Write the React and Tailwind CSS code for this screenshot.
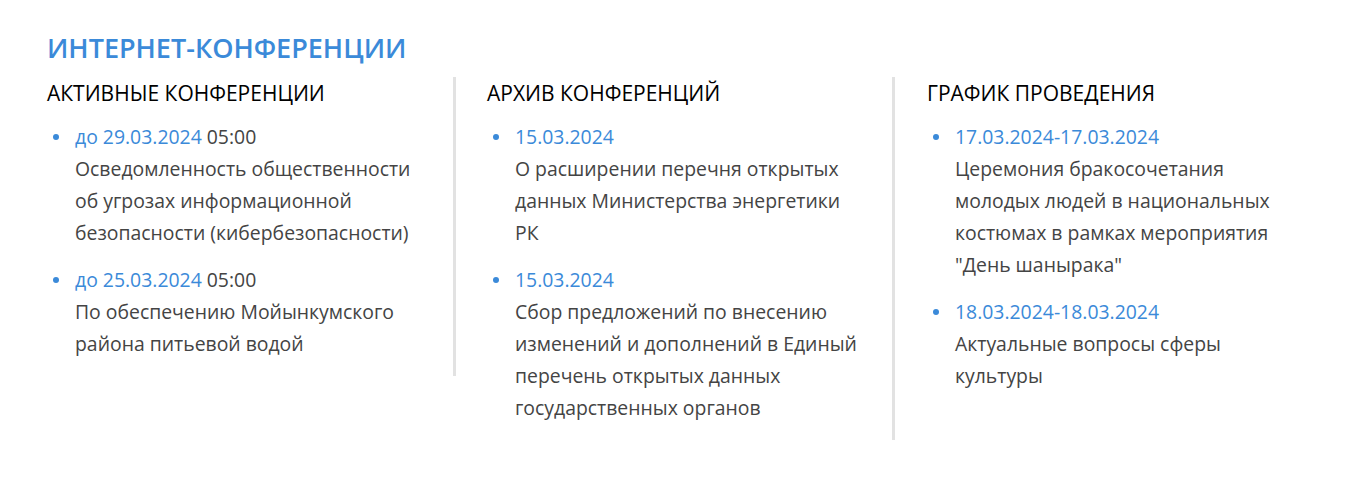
import React from 'react';

const columns = [
  {
    title: 'АКТИВНЫЕ КОНФЕРЕНЦИИ',
    items: [
      { date: 'до 29.03.2024', time: '05:00', lines: ['Осведомленность общественности', 'об угрозах информационной', 'безопасности (кибербезопасности)'] },
      { date: 'до 25.03.2024', time: '05:00', lines: ['По обеспечению Мойынкумского', 'района питьевой водой'] },
    ],
  },
  {
    title: 'АРХИВ КОНФЕРЕНЦИЙ',
    items: [
      { date: '15.03.2024', lines: ['О расширении перечня открытых', 'данных Министерства энергетики', 'РК'] },
      { date: '15.03.2024', lines: ['Сбор предложений по внесению', 'изменений и дополнений в Единый', 'перечень открытых данных', 'государственных органов'] },
    ],
  },
  {
    title: 'ГРАФИК ПРОВЕДЕНИЯ',
    items: [
      { date: '17.03.2024-17.03.2024', lines: ['Церемония бракосочетания', 'молодых людей в национальных', 'костюмах в рамках мероприятия', '"День шанырака"'] },
      { date: '18.03.2024-18.03.2024', lines: ['Актуальные вопросы сферы', 'культуры'] },
    ],
  },
];

export default function App() {
  return (
    <div className="w-[1348px] h-[488px] bg-white pl-[47px] pt-[30px]" style={{ fontFamily: '"Open Sans", sans-serif' }}>
      {/* Header */}
      <h1 className="text-[27px] leading-[36px] font-semibold text-[#3b8ad9]">ИНТЕРНЕТ-КОНФЕРЕНЦИИ</h1>

      {/* Columns */}
      <div className="flex items-start mt-[11px]">
        {columns.map((col, i) => (
          <div
            key={col.title}
            className={`${i === 0 ? 'w-[409px] pl-0' : i === 1 ? 'w-[439px] pl-[31px]' : 'w-[400px] pl-[32px]'} ${
              i < 2 ? 'border-r-[3px] border-[#e2e2e2]' : ''
            } pb-[16px]`}
          >
            <h2 className="text-[21px] leading-[28px] text-black mt-[2px]">{col.title}</h2>
            <ul className="mt-[14px] space-y-[15px]">
              {col.items.map((item, j) => (
                <li key={j} className="relative pl-[28px] text-[19.4px] leading-[32px] text-[#444] whitespace-nowrap">
                  <span className="absolute left-[6px] top-[13px] w-[6px] h-[6px] rounded-full bg-[#3b8ad9]" />
                  <div>
                    <span className="text-[#3b8ad9]">{item.date}</span>
                    {item.time && <span> {item.time}</span>}
                  </div>
                  {item.lines.map((l) => (
                    <div key={l}>{l}</div>
                  ))}
                </li>
              ))}
            </ul>
          </div>
        ))}
      </div>
    </div>
  );
}
